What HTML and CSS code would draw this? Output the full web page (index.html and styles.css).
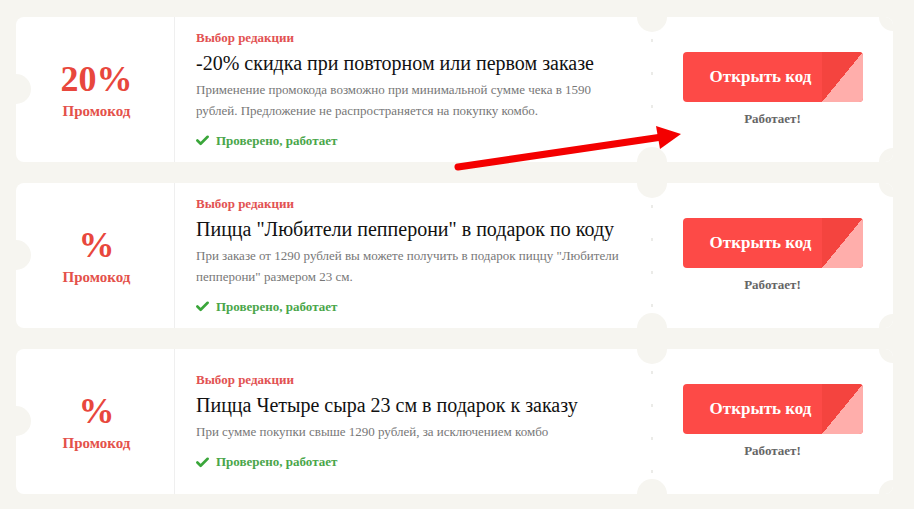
FILE: index.html
```html
<!DOCTYPE html>
<html lang="ru">
<head>
<meta charset="utf-8">
<title>Промокоды</title>
<link rel="stylesheet" href="styles.css">
</head>
<body>
<div class="list">
  <div class="card">
    <div class="promo"><div class="val">20%</div><div class="lbl">Промокод</div></div>
    <div class="info">
      <div class="tag">Выбор редакции</div>
      <div class="title">-20% скидка при повторном или первом заказе</div>
      <div class="desc">Применение промокода возможно при минимальной сумме чека в 1590 рублей. Предложение не распространяется на покупку комбо.</div>
      <div class="check"><svg class="tick" viewBox="0 0 14 11" width="13" height="11"><path d="M1.5 5.5 L5 9 L12.5 1.5" fill="none" stroke="#3aa63a" stroke-width="2.8" stroke-linecap="round" stroke-linejoin="round"/></svg>Проверено, работает</div>
    </div>
    <div class="action">
      <div class="btn"><span class="btn-text">Открыть код</span><span class="peel"></span></div>
      <div class="status">Работает!</div>
    </div>
    <span class="notch notch-left"></span>
    <span class="notch notch-mid-top"></span>
    <span class="notch notch-mid-bottom"></span>
    <span class="notch notch-right-top"></span>
    <span class="notch notch-right-bottom"></span>
  </div>

  <div class="card">
    <div class="promo"><div class="val">%</div><div class="lbl">Промокод</div></div>
    <div class="info">
      <div class="tag">Выбор редакции</div>
      <div class="title">Пицца "Любители пепперони" в подарок по коду</div>
      <div class="desc">При заказе от 1290 рублей вы можете получить в подарок пиццу "Любители пепперони" размером 23 см.</div>
      <div class="check"><svg class="tick" viewBox="0 0 14 11" width="13" height="11"><path d="M1.5 5.5 L5 9 L12.5 1.5" fill="none" stroke="#3aa63a" stroke-width="2.8" stroke-linecap="round" stroke-linejoin="round"/></svg>Проверено, работает</div>
    </div>
    <div class="action">
      <div class="btn"><span class="btn-text">Открыть код</span><span class="peel"></span></div>
      <div class="status">Работает!</div>
    </div>
    <span class="notch notch-left"></span>
    <span class="notch notch-mid-top"></span>
    <span class="notch notch-mid-bottom"></span>
    <span class="notch notch-right-top"></span>
    <span class="notch notch-right-bottom"></span>
  </div>

  <div class="card">
    <div class="promo"><div class="val">%</div><div class="lbl">Промокод</div></div>
    <div class="info">
      <div class="tag">Выбор редакции</div>
      <div class="title">Пицца Четыре сыра 23 см в подарок к заказу</div>
      <div class="desc">При сумме покупки свыше 1290 рублей, за исключением комбо</div>
      <div class="check"><svg class="tick" viewBox="0 0 14 11" width="13" height="11"><path d="M1.5 5.5 L5 9 L12.5 1.5" fill="none" stroke="#3aa63a" stroke-width="2.8" stroke-linecap="round" stroke-linejoin="round"/></svg>Проверено, работает</div>
    </div>
    <div class="action">
      <div class="btn"><span class="btn-text">Открыть код</span><span class="peel"></span></div>
      <div class="status">Работает!</div>
    </div>
    <span class="notch notch-left"></span>
    <span class="notch notch-mid-top"></span>
    <span class="notch notch-mid-bottom"></span>
    <span class="notch notch-right-top"></span>
    <span class="notch notch-right-bottom"></span>
  </div>
</div>

<svg class="arrow" width="914" height="509" viewBox="0 0 914 509">
  <line x1="458" y1="167" x2="662" y2="137" stroke="#f40000" stroke-width="7" stroke-linecap="round"/>
  <polygon points="656,126 681,134 660,149" fill="#f40000"/>
</svg>
</body>
</html>
```

FILE: styles.css
```css
* { box-sizing: border-box; }

body {
  margin: 0;
  padding: 17px 21px 0 16px;
  background: #f6f5f0;
  font-family: "Liberation Serif", "Times New Roman", serif;
  width: 914px;
  height: 509px;
  overflow: hidden;
  position: relative;
}

.list {
  display: flex;
  flex-direction: column;
  gap: 21px;
}

.card {
  position: relative;
  width: 877px;
  height: 145px;
  background: #ffffff;
  border-radius: 8px;
  overflow: hidden;
  display: grid;
  grid-template-columns: 159px 477px 241px;
}

.promo {
  display: flex;
  flex-direction: column;
  align-items: center;
  justify-content: center;
  border-right: 1px solid #efefef;
  color: #e8473d;
  font-weight: bold;
  padding: 2px 0 0 3px;
}

.val {
  font-size: 36px;
  line-height: 36px;
}

.lbl {
  font-size: 15px;
  line-height: 20px;
  margin-top: 4px;
  color: #e4514a;
}

.info {
  display: flex;
  flex-direction: column;
  justify-content: center;
  padding: 0 26px 0 21px;
}

.tag {
  font-size: 13px;
  line-height: 16px;
  font-weight: bold;
  color: #e25252;
}

.title {
  margin-top: 4px;
  font-size: 20px;
  line-height: 26px;
  color: #111111;
}

.desc {
  margin-top: 3px;
  font-size: 13px;
  line-height: 21px;
  color: #777777;
}

.check {
  margin-top: 11px;
  display: flex;
  align-items: center;
  gap: 7px;
  font-size: 13px;
  line-height: 18px;
  font-weight: bold;
  color: #4aa64a;
}

.tick { display: block; flex: none; }

.action {
  position: relative;
  display: flex;
  flex-direction: column;
  align-items: center;
  justify-content: center;
}

.action::before {
  content: "";
  position: absolute;
  left: -1px;
  top: 0;
  width: 2px;
  height: 100%;
  background-image: repeating-linear-gradient(to bottom, transparent 0, transparent 22px, #ebebe8 22px, #ebebe8 25px, transparent 25px, transparent 33px);
}

.btn {
  position: relative;
  width: 180px;
  height: 50px;
  border-radius: 4px;
  overflow: hidden;
  background: #fd4a47;
  display: flex;
  align-items: center;
  justify-content: center;
  padding-right: 24px;
}

.btn-text {
  color: #ffffff;
  font-size: 17px;
  font-weight: bold;
}

.peel {
  position: absolute;
  right: 0;
  top: 0;
  width: 41px;
  height: 50px;
  background: linear-gradient(to top left, #ffaeab 50%, #f4443f 50%);
}

.status {
  margin-top: 9px;
  font-size: 13px;
  line-height: 16px;
  font-weight: bold;
  color: #666666;
}

.notch {
  position: absolute;
  width: 30px;
  height: 30px;
  border-radius: 50%;
  background: #f6f5f0;
}

.notch-left { left: -15px; top: 57px; }
.notch-mid-top { left: 621px; top: -15px; }
.notch-mid-bottom { left: 621px; bottom: -15px; }
.notch-right-top { right: -14px; top: -14px; width: 28px; height: 28px; }
.notch-right-bottom { right: -14px; bottom: -14px; width: 28px; height: 28px; }

.arrow {
  position: absolute;
  left: 0;
  top: 0;
  pointer-events: none;
}
```
